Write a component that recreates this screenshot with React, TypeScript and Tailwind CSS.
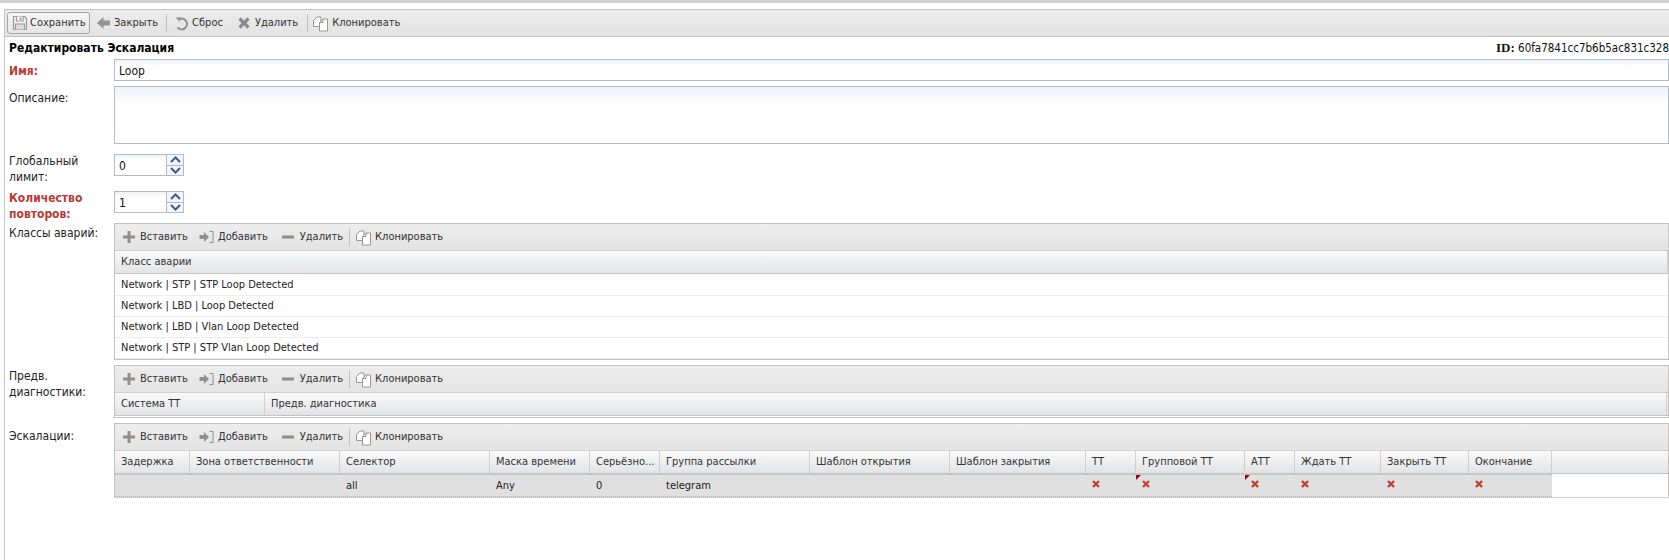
import React from "react";

const FONT = "font-['DejaVu_Sans_Condensed','DejaVu_Sans',sans-serif]";

const SaveIcon = () => (
    <svg width="16" height="16" viewBox="0 0 16 16" fill="none" stroke="#9a9a9a" strokeWidth="1.2">
        <path d="M1.500 1.500h11l2 2v11h-13z" fill="#f0f0f0" />
        <path d="M4.500 1.500v4.500h6.500v-4.500" fill="#fff" />
        <path d="M3.500 14.500v-5.500h9v5.500" fill="#ddd" />
        <path d="M8.500 2.500v2.500" strokeWidth="1.800" />
    </svg>
);

const BackIcon = () => (
    <svg width="15" height="14" viewBox="0 0 15 14" fill="#949494">
        <path d="M7.500 1 1 7l6.500 6V9.500H14v-5H7.500z" />
    </svg>
);

const UndoIcon = () => (
    <svg width="15" height="15" viewBox="0 0 15 15" fill="none" stroke="#8e8e8e" strokeWidth="2">
        <path d="M5 3.200a5.400 5.400 0 1 1-1.600 8.200" />
        <path d="M1.500 1.500h4.600v4.200z" fill="#8e8e8e" stroke="none" />
    </svg>
);

const CrossIcon = () => (
    <svg width="12" height="12" viewBox="0 0 12 12" fill="none" stroke="#8a8a8a" strokeWidth="3.200">
        <path d="M1.500 1.500l9 9M10.500 1.500l-9 9" />
    </svg>
);

const CloneIcon = () => (
    <svg width="17" height="17" viewBox="0 0 17 17" fill="#fff" stroke="#969696">
        <path d="M1.500 5.500 5 2h4v9.500H1.500z" />
        <path d="M7.500 7.500 11 4h4.500v12h-8z" />
        <path d="M11 4v3.500H7.500" fill="none" />
    </svg>
);

const PlusIcon = () => (
    <svg width="14" height="14" viewBox="0 0 14 14" fill="#8e8e8e">
        <path d="M5.500 1h3v4.500H13v3H8.500V13h-3V8.500H1v-3h4.500z" />
    </svg>
);

const AddIcon = () => (
    <svg width="15" height="14" viewBox="0 0 15 14" fill="none">
        <path d="M0.500 5h4.500V2l5 5-5 5V9H0.500z" fill="#909090" />
        <path d="M10.500 1.500H14v11h-3.500" stroke="#909090" />
    </svg>
);

const MinusIcon = () => (
    <svg width="14" height="14" viewBox="0 0 14 14" fill="#8e8e8e">
        <path d="M1 5.500h12v3H1z" />
    </svg>
);

const RedCross = () => (
    <svg width="8" height="8" viewBox="0 0 8 8" fill="none" stroke="#c43c35" strokeWidth="2.300" className="-mt-[3px]">
        <path d="M1 1l6 6M7 1l-6 6" />
    </svg>
);

const Divider = () => <div className="w-px h-[18px] bg-[#c0c0c0]" />;

function ToolButton({ icon, label, iconGap = "gap-[3px]", className = "" }: { icon: React.ReactNode; label: string; iconGap?: string; className?: string }) {
    return (
        <div className={`flex items-center whitespace-nowrap ${iconGap} ${className}`}>
            {icon}
            <span>{label}</span>
        </div>
    );
}

function GridToolbar() {
    return (
        <div className="h-[27px] flex items-center pl-[7px] bg-gradient-to-b from-[#ededed] to-[#e4e4e4] border-b border-[#d0d0d0] text-[#333]">
            <ToolButton icon={<PlusIcon />} label="Вставить" iconGap="gap-[4px]" />
            <ToolButton icon={<AddIcon />} label="Добавить" iconGap="gap-[4px]" className="ml-[11px]" />
            <ToolButton icon={<MinusIcon />} label="Удалить" iconGap="gap-[5px]" className="ml-[13px]" />
            <div className="ml-[6px]"><Divider /></div>
            <ToolButton icon={<CloneIcon />} label="Клонировать" className="ml-[5px]" />
        </div>
    );
}

function HeaderRow({ columns }: { columns: { label: string; width: string }[] }) {
    return (
        <div className="flex h-[23px] bg-gradient-to-b from-[#f9f9f9] to-[#e3e4e6] border-b border-[#c5c5c5] text-[#333]">
            {columns.map((col) => (
                <div key={col.label} className={`${col.width} flex items-center pl-[6px] pt-[1px] border-r border-[#d0d0d0] whitespace-nowrap`}>
                    {col.label}
                </div>
            ))}
            <div className="flex-1" />
        </div>
    );
}

function Spinner({ value }: { value: string }) {
    return (
        <div className="flex w-[70px] h-[22px] border border-[#b5b8c8] bg-gradient-to-b from-[#f0f2f5] to-white to-[30%]">
            <div className="flex-1 flex items-center pl-[4px] pt-[1px] text-[#111] text-[12px]">{value}</div>
            <div className="w-[17px] flex flex-col border-l border-[#b5b8c8] bg-[#f2f5f9]">
                <div className="flex-1 flex items-center justify-center border-b border-[#b5b8c8]">
                    <svg width="11" height="7" viewBox="0 0 11 7" fill="none" stroke="#3d5a88" strokeWidth="2"><path d="M1 6l4.500-4.500L10 6" /></svg>
                </div>
                <div className="flex-1 flex items-center justify-center">
                    <svg width="11" height="7" viewBox="0 0 11 7" fill="none" stroke="#3d5a88" strokeWidth="2"><path d="M1 1l4.500 4.500L10 1" /></svg>
                </div>
            </div>
        </div>
    );
}

function Label({ children, required = false }: { children: React.ReactNode; required?: boolean }) {
    return (
        <div className={`w-[105px] shrink-0 text-[12px] leading-[16px] ${required ? "font-bold text-[#b93a32]" : "text-[#222]"}`}>
            {children}
        </div>
    );
}

const ALARM_ROWS = [
    "Network | STP | STP Loop Detected",
    "Network | LBD | Loop Detected",
    "Network | LBD | Vlan Loop Detected",
    "Network | STP | STP Vlan Loop Detected",
];

const ESCALATION_COLUMNS = [
    { label: "Задержка", width: "w-[75px]", value: "" },
    { label: "Зона ответственности", width: "w-[150px]", value: "" },
    { label: "Селектор", width: "w-[150px]", value: "all" },
    { label: "Маска времени", width: "w-[100px]", value: "Any" },
    { label: "Серьёзно...", width: "w-[70px]", value: "0" },
    { label: "Группа рассылки", width: "w-[150px]", value: "telegram" },
    { label: "Шаблон открытия", width: "w-[140px]", value: "" },
    { label: "Шаблон закрытия", width: "w-[136px]", value: "" },
    { label: "ТТ", width: "w-[50px]", value: "x" },
    { label: "Групповой ТТ", width: "w-[109px]", value: "xm" },
    { label: "АТТ", width: "w-[50px]", value: "xm" },
    { label: "Ждать ТТ", width: "w-[86px]", value: "x" },
    { label: "Закрыть ТТ", width: "w-[88px]", value: "x" },
    { label: "Окончание", width: "w-[83px]", value: "x" },
];

export default function App() {
    return (
        <div className={`${FONT} text-[11px] bg-white h-[560px] overflow-hidden`}>
            <div className="h-[3px] bg-[#d2d2d2]" />
            <div className="h-[6px]" />
            <div className="ml-[4px] h-[551px] border-l border-[#c8c8c8]">
                {/* Main toolbar */}
                <div className="h-[28px] flex items-center pl-[2px] border-y border-[#c4c0c0] bg-gradient-to-b from-[#ececec] to-[#e3e3e3] text-[#333]">
                    <div className="w-[83px] h-[22px] flex items-center gap-[2px] pl-[4px] border border-[#a8a8a8] rounded-[3px] bg-gradient-to-b from-[#f6f6f6] to-[#e6e6e6]">
                        <SaveIcon />
                        <span>Сохранить</span>
                    </div>
                    <ToolButton icon={<BackIcon />} label="Закрыть" className="ml-[6px]" />
                    <div className="ml-[8px]"><Divider /></div>
                    <ToolButton icon={<UndoIcon />} label="Сброс" className="ml-[7px]" />
                    <ToolButton icon={<CrossIcon />} label="Удалить" iconGap="gap-[5px]" className="ml-[15px]" />
                    <div className="ml-[9px]"><Divider /></div>
                    <ToolButton icon={<CloneIcon />} label="Клонировать" className="ml-[4px]" />
                </div>

                {/* Title */}
                <div className="h-[22px] flex items-center justify-between pl-[4px]">
                    <span className="font-bold text-[12px] text-black">Редактировать Эскалация</span>
                    <span className="text-[13px] text-[#111] font-['Liberation_Serif',serif] whitespace-nowrap">
                        <b>ID:</b> <span className={`${FONT} text-[11.500px]`}>60fa7841cc7b6b5ac831c328</span>
                    </span>
                </div>

                <div className="pl-[4px]">
                    <div className="flex items-center h-[22px]">
                        <Label required><div className="pt-[1px]">Имя:</div></Label>
                        <div className="flex-1 h-[22px] flex items-center pl-[4px] pt-[1px] border border-[#b5b8c8] bg-gradient-to-b from-[#eef1f5] to-white to-[30%] text-[12px] text-[#111]">Loop</div>
                    </div>

                    <div className="flex mt-[5px] h-[58px]">
                        <Label><div className="pt-[4px]">Описание:</div></Label>
                        <div className="flex-1 border border-[#b5b8c8] bg-gradient-to-b from-[#eef1f5] to-white to-[30%]" />
                    </div>

                    <div className="flex mt-[10px] h-[21px]">
                        <Label><div className="-mt-[1px]">Глобальный<br />лимит:</div></Label>
                        <Spinner value="0" />
                    </div>

                    <div className="flex mt-[16px] h-[21px]">
                        <Label><div className="font-bold text-[#b93a32] -mt-[1px]">Количество<br />повторов:</div></Label>
                        <Spinner value="1" />
                    </div>

                    {/* Alarm classes */}
                    <div className="flex mt-[11px]">
                        <Label><div className="pt-[2px]">Классы аварий:</div></Label>
                        <div className="flex-1 border border-[#c4c0c0] border-r-[#c8c8c8]">
                            <GridToolbar />
                            <HeaderRow columns={[{ label: "Класс аварии", width: "w-full" }]} />
                            <div className="mt-[1px]">
                                {ALARM_ROWS.map((row) => (
                                    <div key={row} className="h-[21px] flex items-center pl-[6px] pt-[1px] border-b border-[#ececec] text-[#222]">{row}</div>
                                ))}
                            </div>
                        </div>
                    </div>

                    {/* Diagnostics */}
                    <div className="flex mt-[5px]">
                        <Label><div className="pt-[3px]">Предв.<br />диагностики:</div></Label>
                        <div className="flex-1 border border-[#c4c0c0]">
                            <GridToolbar />
                            <HeaderRow columns={[{ label: "Система ТТ", width: "w-[150px]" }, { label: "Предв. диагностика", width: "w-[1402px]" }]} />
                            <div className="h-[1px]" />
                        </div>
                    </div>

                    {/* Escalations */}
                    <div className="flex mt-[5px]">
                        <Label><div className="pt-[5px]">Эскалации:</div></Label>
                        <div className="flex-1 border border-[#c4c0c0] border-b-[#d0d0d0]">
                            <GridToolbar />
                            <HeaderRow columns={ESCALATION_COLUMNS} />
                            <div className="flex h-[23px] text-[#222]">
                                <div className="flex bg-[#e0e0e0] border-y border-dotted border-[#b0b0b0]">
                                    {ESCALATION_COLUMNS.map((col) => (
                                        <div key={col.label} className={`${col.width} relative flex items-center pl-[6px]`}>
                                            {col.value.startsWith("x") ? <RedCross /> : <span className="pt-[1px]">{col.value}</span>}
                                            {col.value === "xm" && (
                                                <div className="absolute left-0 top-0 w-0 h-0 border-t-[5px] border-r-[5px] border-t-[#a80000] border-r-transparent" />
                                            )}
                                        </div>
                                    ))}
                                </div>
                            </div>
                        </div>
                    </div>
                </div>
            </div>
        </div>
    );
}
